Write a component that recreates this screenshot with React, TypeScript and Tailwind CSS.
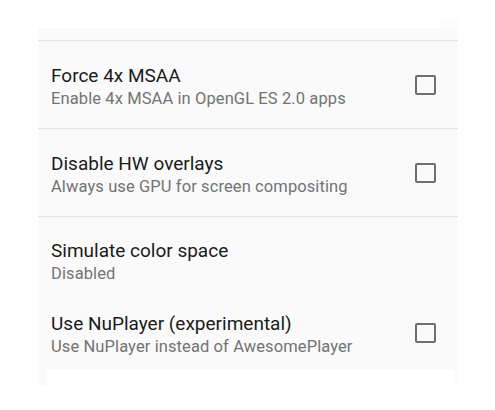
import React from "react";

const Check = () => (
  <div className="w-[21px] h-[20px] mt-[12px] border-2 border-[#6e6e6e] rounded-[2px] shrink-0" />
);

const Title = ({ children }: { children: React.ReactNode }) => (
  <div className="text-[19px] leading-[25px] text-[#1a1a1a]">{children}</div>
);
const Sub = ({ children }: { children: React.ReactNode }) => (
  <div className="text-[16.5px] leading-[22px] tracking-[0.1px] text-[#737373]">{children}</div>
);

export default function App() {
  return (
    <div
      className="w-[495px] h-[410px] bg-white overflow-hidden"
      style={{ fontFamily: "Roboto, 'Noto Sans', sans-serif" }}
    >
      <div className="pt-[19px] pl-[38px] w-[458px]">
        <div className="flex justify-end">
          <div className="w-[17px] h-[9px] bg-[#fcfcfc]" />
        </div>
        <div className="bg-[#fafafa]">
          <div className="h-[12px]" />
          <div className="h-[1px] bg-[#e4e4e4]" />
          <div className="flex items-start justify-between h-[87px] pl-[13px] pr-[22px] pt-[22px]">
            <div>
              <Title>Force 4x MSAA</Title>
              <Sub>Enable 4x MSAA in OpenGL ES 2.0 apps</Sub>
            </div>
            <Check />
          </div>
          <div className="h-[1px] bg-[#e4e4e4]" />
          <div className="flex items-start justify-between h-[87px] pl-[13px] pr-[22px] pt-[22px]">
            <div>
              <Title>Disable HW overlays</Title>
              <Sub>Always use GPU for screen compositing</Sub>
            </div>
            <Check />
          </div>
          <div className="h-[1px] bg-[#e4e4e4]" />
          <div className="h-[72px] pl-[13px] pt-[21px]">
            <Title>Simulate color space</Title>
            <Sub>Disabled</Sub>
          </div>
          <div className="flex items-start justify-between h-[80px] pl-[13px] pr-[22px] pt-[22px]">
            <div>
              <Title>Use NuPlayer (experimental)</Title>
              <Sub>Use NuPlayer instead of AwesomePlayer</Sub>
            </div>
            <Check />
          </div>
          <div className="h-[16px] pl-[9px] pr-[3px]">
            <div className="h-full bg-white" />
          </div>
        </div>
      </div>
    </div>
  );
}
